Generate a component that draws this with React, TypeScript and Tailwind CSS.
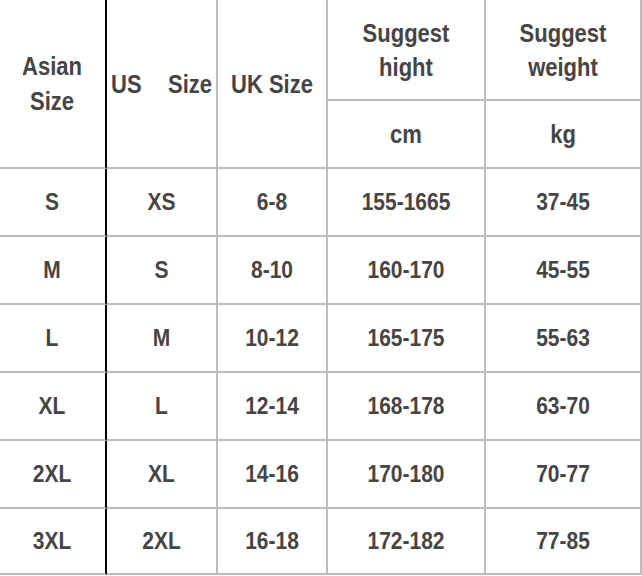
import React from "react";

const rows = [
  ["S", "XS", "6-8", "155-1665", "37-45"],
  ["M", "S", "8-10", "160-170", "45-55"],
  ["L", "M", "10-12", "165-175", "55-63"],
  ["XL", "L", "12-14", "168-178", "63-70"],
  ["2XL", "XL", "14-16", "170-180", "70-77"],
  ["3XL", "2XL", "16-18", "172-182", "77-85"],
];

function T({ children, className = "" }: { children: React.ReactNode; className?: string }) {
  return <span className={"inline-block scale-y-[1.18] " + className}>{children}</span>;
}

export default function App() {
  const g = "border-[#bdbdbd]";
  return (
    <div
      className="w-[642px] h-[576px] bg-white text-[#454545] font-bold"
      style={{ fontFamily: '"Liberation Sans", Arial, sans-serif' }}
    >
      <div className="grid grid-cols-[107px_111px_110px_158px_156px] grid-rows-[101px_68px_68px_68px_68px_68px_68px_66px]">
        <div className={`row-span-2 border-r-2 border-r-black border-b-2 ${g} flex flex-col items-center justify-center text-[22px] leading-[35px] pr-[1px]`}>
          <T>Asian</T>
          <T>Size</T>
        </div>
        <div className={`row-span-2 border-r-2 border-b-2 ${g} flex items-center justify-between pl-[4px] pr-[4px] pt-[2px] text-[22px]`}>
          <T>US</T>
          <T>Size</T>
        </div>
        <div className={`row-span-2 border-r-2 border-b-2 ${g} flex items-center justify-center pt-[2px] text-[22px]`}>
          <T>UK Size</T>
        </div>
        <div className={`border-r-2 border-b-2 ${g} flex flex-col items-center justify-center text-[22px] leading-[34px] pt-[2px]`}>
          <T>Suggest</T>
          <T>hight</T>
        </div>
        <div className={`border-r-2 border-b-2 ${g} flex flex-col items-center justify-center text-[22px] leading-[34px] pt-[2px]`}>
          <T>Suggest</T>
          <T>weight</T>
        </div>
        <div className={`border-r-2 border-b-2 ${g} flex items-center justify-center text-[22px]`}>
          <T>cm</T>
        </div>
        <div className={`border-r-2 border-b-2 ${g} flex items-center justify-center text-[22px]`}>
          <T>kg</T>
        </div>
        {rows.map((r, i) => (
          <React.Fragment key={i}>
            {r.map((c, j) => (
              <div
                key={j}
                className={`border-b-2 border-r-2 ${j === 0 ? "border-b-[#bdbdbd] border-r-black pr-[1px]" : g} flex items-center justify-center text-[21px]`}
              >
                <T>{c}</T>
              </div>
            ))}
          </React.Fragment>
        ))}
      </div>
    </div>
  );
}
